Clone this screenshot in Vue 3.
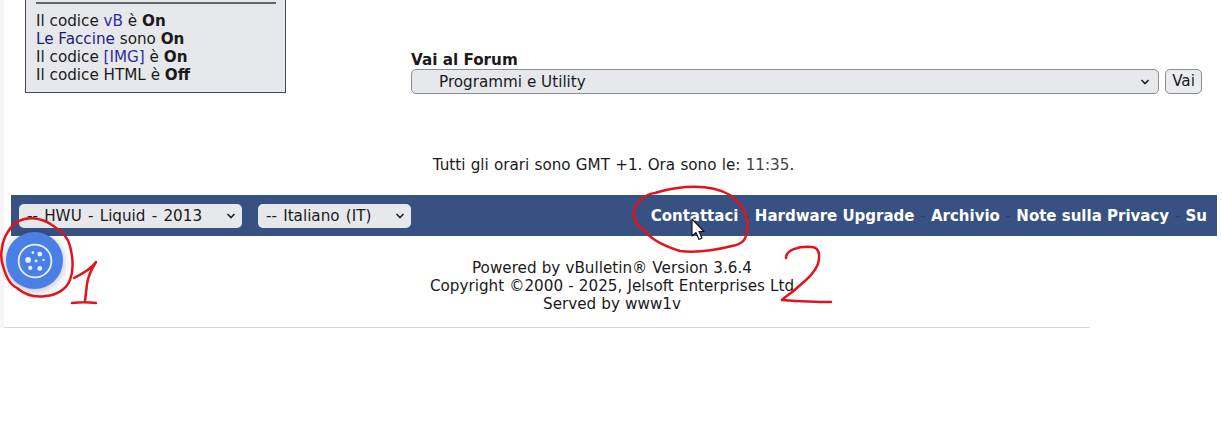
<template>
  <div class="page">
    <div class="sheet">
      <div class="top">
        <div class="rules">
          <hr class="rule">
          <div class="line"><span>Il codice </span><span class="link">vB</span><span> è </span><b>On</b></div>
          <div class="line"><span class="link2">Le Faccine</span><span> sono </span><b>On</b></div>
          <div class="line"><span>Il codice </span><span class="link">[IMG]</span><span> è </span><b>On</b></div>
          <div class="line"><span>Il codice HTML è </span><b>Off</b></div>
        </div>
        <div class="jump">
          <div class="jump-label">Vai al Forum</div>
          <div class="jump-row">
            <div class="fake-select wide">
              <span>Programmi e Utility</span>
              <svg class="chev" viewBox="0 0 10 6"><path d="M1.5 1 5 4.5 8.5 1" /></svg>
            </div>
            <div class="btn">Vai</div>
          </div>
        </div>
      </div>

      <div class="time">Tutti gli orari sono GMT +1. Ora sono le: <span class="clock">11:35</span>.</div>

      <div class="bar">
        <div class="fake-select style-pick">
          <span>-- HWU - Liquid - 2013</span>
          <svg class="chev" viewBox="0 0 10 6"><path d="M1.5 1 5 4.5 8.5 1" /></svg>
        </div>
        <div class="fake-select lang-pick">
          <span>-- Italiano (IT)</span>
          <svg class="chev" viewBox="0 0 10 6"><path d="M1.5 1 5 4.5 8.5 1" /></svg>
        </div>
        <div class="bar-links">
          <template v-for="(l, i) in links" :key="l">
            <span v-if="i > 0" class="dash">-</span>
            <a>{{ l }}</a>
          </template>
        </div>
      </div>

      <div class="credits">
        <div>Powered by vBulletin® Version 3.6.4</div>
        <div>Copyright ©2000 - 2025, Jelsoft Enterprises Ltd</div>
        <div>Served by www1v</div>
      </div>
    </div>

    <!-- cookie button floats over the bar -->
    <div class="cookie">
      <svg viewBox="0 0 34 34" width="36" height="36">
        <circle cx="17" cy="17" r="15.5" fill="none" stroke="#e8f0fd" stroke-width="1.7" />
        <circle cx="10.5" cy="16" r="2.7" fill="#e8f0fd" />
        <circle cx="15" cy="9" r="1.3" fill="#e8f0fd" />
        <circle cx="21.5" cy="10.5" r="2.3" fill="#e8f0fd" />
        <circle cx="18" cy="17" r="1.4" fill="#e8f0fd" />
        <circle cx="25" cy="16" r="1.1" fill="#e8f0fd" />
        <circle cx="12.5" cy="23.5" r="2" fill="#e8f0fd" />
        <circle cx="21.5" cy="24" r="2.3" fill="#e8f0fd" />
      </svg>
    </div>

    <!-- hand drawn marks on top of the screenshot -->
    <svg class="marks" viewBox="0 0 1222 426" width="1222" height="426">
      <g fill="none" stroke="#e0141c" stroke-width="2.5" stroke-linecap="round" stroke-linejoin="round">
        <path d="M19 221C12 224 8 231 5 237 1 246 0 258 3 266 6 276 9 284 17 288 24 294 34 298 46 296 56 295 66 290 70 280 74 270 73 258 70 246 68 236 60 230 52 225 42 218 28 216 19 221Z" />
        <path d="M74 278C82 274 92 268 96 262 91 270 88 276 87 284L85 301M72 303C80 302 88 302 96 303" />
        <path d="M655 193C646 194 636 201 634 211 632 219 637 226 646 232 652 240 664 246 680 251 696 253 716 250 732 246 744 244 747 238 747 228 749 216 742 204 730 195 718 188 702 186 686 187 674 188 664 190 655 193Z" />
        <path d="M786 258C786 250 798 246 812 247 820 248 820 256 818 264 814 274 806 280 798 287 792 293 786 296 782 300 796 301 815 302 831 302" />
      </g>
    </svg>

    <svg class="pointer" viewBox="0 0 16 24" width="16" height="24">
      <path d="M1 1V18L5 14.5 8 21.5 11 20 8 13.5H13Z" fill="#fff" stroke="#111" stroke-width="1.1" stroke-linejoin="round" />
    </svg>
  </div>
</template>

<script setup>
const links = ["Contattaci", "Hardware Upgrade", "Archivio", "Note sulla Privacy", "Su"];
</script>

<style>
html,
body {
  margin: 0;
  background: #fff;
}
</style>

<style scoped>
.page {
  position: relative;
  width: 1222px;
  height: 426px;
  overflow: hidden;
  background: #fff;
  font-family: "DejaVu Sans", Verdana, sans-serif;
  font-size: 15.2px;
  color: #1a1a1a;
}
.sheet {
  margin-left: 4px;
  height: 327px;
  width: 1086px;
  border-bottom: 1px solid #d9d9d9;
  box-shadow: -4px 0 0 #f6f6f6;
}
.top {
  display: flex;
  align-items: flex-start;
  width: 1218px;
}
.rules {
  box-sizing: border-box;
  width: 261px;
  height: 93px;
  margin-left: 21px;
  padding: 2px 9px 0 10px;
  background: #e7e8ec;
  border: 1px solid #44495a;
  border-top: none;
  line-height: 18px;
}
.rule {
  height: 2px;
  margin: 0 0 8px;
  border: none;
  background: #666;
}
.line {
  white-space: nowrap;
}
.link {
  color: #30309a;
}
.link2 {
  color: #1c1c7a;
}
.jump {
  margin: 51px 0 0 125px;
  width: 791px;
}
.jump-label {
  font-weight: bold;
  line-height: 18px;
}
.jump-row {
  display: flex;
  gap: 6px;
}
.fake-select {
  box-sizing: border-box;
  display: flex;
  align-items: center;
  justify-content: space-between;
  background: #e7e8ec;
  border: 1px solid #8d8d93;
  border-radius: 5px;
  white-space: nowrap;
}
.wide {
  width: 748px;
  height: 25px;
  padding: 0 8px 0 27px;
}
.chev {
  width: 10px;
  height: 6px;
  flex: none;
}
.chev path {
  fill: none;
  stroke: #222;
  stroke-width: 1.6;
}
.btn {
  box-sizing: border-box;
  width: 37px;
  height: 25px;
  line-height: 23px;
  text-align: center;
  background: #eaebef;
  border: 1px solid #8d8d93;
  border-radius: 5px;
}
.time {
  box-sizing: border-box;
  width: 1218px;
  margin-top: 62px;
  padding-left: 1px;
  text-align: center;
  line-height: 18px;
  word-spacing: 0.4px;
}
.clock {
  color: #444;
}
.bar {
  box-sizing: border-box;
  display: flex;
  align-items: center;
  width: 1206px;
  height: 41px;
  margin: 21px 0 0 7px;
  padding: 0 10px 0 8px;
  background: #375183;
}
.bar .fake-select {
  height: 24px;
  border: none;
  padding: 0 6px 0 8px;
  word-spacing: 1.4px;
}
.style-pick {
  width: 223px;
}
.lang-pick {
  width: 153px;
  margin-left: 16px;
}
.bar-links {
  margin-left: auto;
  display: flex;
  gap: 5.5px;
  color: #fff;
  font-size: 15px;
  font-weight: bold;
  white-space: nowrap;
}
.dash {
  color: #2a3f6c;
  font-weight: normal;
}
.credits {
  box-sizing: border-box;
  width: 1218px;
  margin-top: 23px;
  padding-right: 2px;
  text-align: center;
  line-height: 18px;
  word-spacing: 0.3px;
}
.cookie {
  position: absolute;
  left: 6px;
  top: 232px;
  width: 57px;
  height: 57px;
  border-radius: 50%;
  background: #4a80e6;
  box-shadow: 0 2px 10px rgba(0, 0, 0, 0.28);
  display: flex;
  align-items: center;
  justify-content: center;
}
.marks {
  position: absolute;
  left: 0;
  top: 0;
  pointer-events: none;
}
.pointer {
  position: absolute;
  left: 691px;
  top: 218px;
}
</style>
